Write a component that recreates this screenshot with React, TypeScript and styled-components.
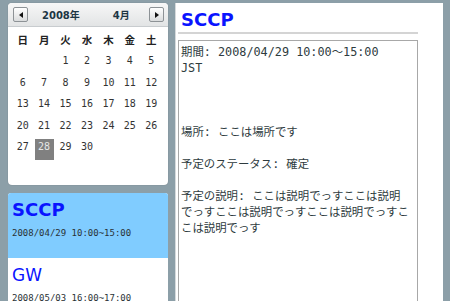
import React from "react";
import styled, { createGlobalStyle } from "styled-components";

const Global = createGlobalStyle`
  html, body { margin: 0; padding: 0; height: 100%; }
  body {
    background: #8c9fa8;
    font-family: "Liberation Sans", "Noto Sans CJK JP", sans-serif;
    overflow: hidden;
  }
`;

const Page = styled.div`
  display: flex;
  gap: 7px;
  padding: 3px 7px 0 8px;
  height: 301px;
  box-sizing: border-box;
`;

const LeftCol = styled.div`
  width: 160px;
  display: flex;
  flex-direction: column;
  gap: 8px;
  flex-shrink: 0;
`;

const CalCard = styled.div`
  height: 182px;
  background: #fff;
  border-radius: 4px;
  box-shadow: 0 0 1px rgba(0, 0, 0, 0.35);
  overflow: hidden;
`;

const CalHeader = styled.div`
  height: 24px;
  display: flex;
  align-items: center;
  padding: 0 4px 0 5px;
  background: linear-gradient(#f7f7f7, #e2e4e5);
  border-bottom: 1px solid #c8cccf;
  box-sizing: border-box;
`;

const NavBtn = styled.button`
  width: 15px;
  height: 15px;
  padding: 0;
  border: 1px solid #8d9296;
  border-radius: 2px;
  background: linear-gradient(#ffffff, #dadcdd);
  display: flex;
  align-items: center;
  justify-content: center;
  flex-shrink: 0;
`;

const Tri = styled.span<{ $dir: "l" | "r" }>`
  width: 0;
  height: 0;
  border-top: 3.5px solid transparent;
  border-bottom: 3.5px solid transparent;
  ${(p) => (p.$dir === "l" ? "border-right: 4px solid #111;" : "border-left: 4px solid #111;")}
`;

const HeadTitle = styled.div`
  flex: 1;
  display: flex;
  padding-left: 14px;
  gap: 33px;
  font-family: "DejaVu Sans", "Noto Sans CJK JP", sans-serif;
  font-weight: bold;
  font-size: 10px;
  color: #1d3644;
`;

const Grid = styled.div`
  display: grid;
  grid-template-columns: repeat(7, 1fr);
  grid-auto-rows: 21.5px;
  padding: 4.5px 6px 0 4px;
`;

const WeekDay = styled.div`
  text-align: center;
  line-height: 15px;
  font-family: "Noto Sans CJK JP", sans-serif;
  font-weight: bold;
  font-size: 10.5px;
  color: #222;
`;

const Day = styled.div<{ $sel?: boolean }>`
  display: flex;
  justify-content: center;
  line-height: 15px;
  font-family: "DejaVu Sans Mono", monospace;
  font-size: 10px;
  color: #333;
  & > span {
    width: 19px;
    height: 21px;
    text-align: center;
    background: ${(p) => (p.$sel ? "#808080" : "transparent")};
    color: ${(p) => (p.$sel ? "#e6e6e6" : "#333")};
  }
`;

const List = styled.div`
  flex: 1;
  background: #fff;
  border-radius: 3px 3px 0 0;
  overflow: hidden;
`;

const Item = styled.div<{ $active?: boolean }>`
  height: 65px;
  box-sizing: border-box;
  padding: 6px 4px;
  background: ${(p) => (p.$active ? "#80ccff" : "#fff")};
`;

const ItemTitle = styled.div<{ $bold?: boolean }>`
  font-family: "DejaVu Sans", sans-serif;
  font-size: ${(p) => (p.$bold ? "18px" : "17px")};
  line-height: 22px;
  font-weight: ${(p) => (p.$bold ? "bold" : "normal")};
  color: #0a14ff;
`;

const ItemDate = styled.div`
  margin-top: 6px;
  font-family: "DejaVu Sans Mono", monospace;
  font-size: 9px;
  line-height: 12px;
  color: #2a3236;
`;

const Detail = styled.div`
  width: 268px;
  background: #fff;
  box-sizing: border-box;
  padding: 0 25px 0 2px;
  border-left: 1px solid #d6dadc;
  display: flex;
  flex-direction: column;
`;

const DetailTitle = styled.div`
  font-family: "DejaVu Sans", sans-serif;
  font-weight: bold;
  font-size: 18px;
  line-height: 22px;
  color: #0a14ff;
  padding: 6px 0 0 3px;
  height: 31px;
  box-sizing: border-box;
  border-bottom: 2px solid #d4d4d4;
`;

const Body = styled.div`
  margin-top: 6px;
  flex: 1;
  border: 1px solid #a8a8a8;
  border-bottom: none;
  padding: 2px 2px;
  white-space: pre;
  font-family: "Noto Sans CJK JP", sans-serif;
  font-size: 11.4px;
  line-height: 16px;
  color: #2e3b3e;
  overflow: hidden;
`;

const Line = styled.div`
  height: 16px;
`;

const Latin = styled.span`
  font-family: "DejaVu Sans Mono", monospace;
  font-size: 11.8px;
`;

const weekdays = ["日", "月", "火", "水", "木", "金", "土"];
const days: (number | null)[] = [null, null, ...Array.from({ length: 30 }, (_, i) => i + 1)];

const bodyLines = [
  "期間: 2008/04/29 10:00～15:00",
  "JST",
  "",
  "",
  "",
  "場所: ここは場所です",
  "",
  "予定のステータス: 確定",
  "",
  "予定の説明: ここは説明でっすここは説明",
  "でっすここは説明でっすここは説明でっすこ",
  "こは説明でっす",
];

function renderLine(text: string) {
  const runs = text.match(/[\x20-\x7e]+|[^\x20-\x7e]+/g) || [];
  return runs.map((r, i) =>
    /^[\x20-\x7e]+$/.test(r) ? <Latin key={i}>{r}</Latin> : <span key={i}>{r}</span>
  );
}

export default function App() {
  return (
    <>
      <Global />
      <Page>
        <LeftCol>
          <CalCard>
            <CalHeader>
              <NavBtn>
                <Tri $dir="l" />
              </NavBtn>
              <HeadTitle>
                <span>2008年</span>
                <span>4月</span>
              </HeadTitle>
              <NavBtn>
                <Tri $dir="r" />
              </NavBtn>
            </CalHeader>
            <Grid>
              {weekdays.map((w) => (
                <WeekDay key={w}>{w}</WeekDay>
              ))}
              {days.map((d, i) => (
                <Day key={i} $sel={d === 28}>
                  <span>{d ?? ""}</span>
                </Day>
              ))}
            </Grid>
          </CalCard>
          <List>
            <Item $active>
              <ItemTitle $bold>SCCP</ItemTitle>
              <ItemDate>2008/04/29 10:00~15:00</ItemDate>
            </Item>
            <Item>
              <ItemTitle>GW</ItemTitle>
              <ItemDate>2008/05/03 16:00~17:00</ItemDate>
            </Item>
          </List>
        </LeftCol>
        <Detail>
          <DetailTitle>SCCP</DetailTitle>
          <Body>
            {bodyLines.map((l, i) => (
              <Line key={i}>{renderLine(l)}</Line>
            ))}
          </Body>
        </Detail>
      </Page>
    </>
  );
}
